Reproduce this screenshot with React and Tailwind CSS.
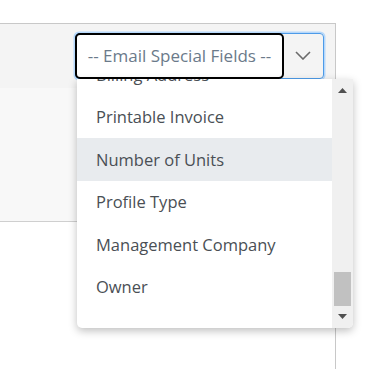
import React from 'react';

const items = [
  'Billing Address',
  'Printable Invoice',
  'Number of Units',
  'Profile Type',
  'Management Company',
  'Owner',
];

function Chevron() {
  return (
    <svg width="16" height="9" viewBox="0 0 16 9" fill="none">
      <path d="M1 1l7 7 7-7" stroke="#6b6b6b" strokeWidth="1.6" />
    </svg>
  );
}

export default function App() {
  const active = 'Number of Units';

  return (
    <div className="relative h-[369px] w-[379px] overflow-hidden bg-white pt-[23px] font-['Open_Sans',sans-serif]">
      {/* Panel */}
      <div className="h-[346px] w-[336px] border-t border-r border-[#c8c8c8]">
        <div className="flex h-[64px] justify-end bg-[#f4f4f4] pt-[9px] pr-[11px]">
          {/* Select with focus ring */}
          <div className="flex h-[46px] w-[249px] rounded-[4px] border border-[#4d9be8] shadow-[0_0_0_1.5px_#b6d8fb]">
            <div className="flex h-[46px] w-[209px] -mt-px -ml-px items-center justify-center rounded-[5px] border-2 border-black bg-white pb-px text-[17px] text-[#6b7a8a]">
              -- Email Special Fields --
            </div>
            <div className="flex flex-1 items-center justify-center pb-[1px] pr-[2px]">
              <Chevron />
            </div>
          </div>
        </div>
        <div className="h-[134px] border-b border-[#cfcfcf] bg-[#f8f8f8]" />
      </div>

      {/* Dropdown list */}
      <div className="absolute left-[77px] top-[79px] flex h-[249px] w-[276px] overflow-hidden rounded-b-[5px] bg-white shadow-[0_3px_8px_rgba(0,0,0,0.25)]">
        <div className="flex-1 overflow-hidden">
          <div className="-mt-[26px]">
            {items.map((item) => (
              <div
                key={item}
                className={`flex h-[42.5px] items-center pl-[19px] pt-[2px] text-[16.5px] text-[#4a4f55] ${
                  item === active ? 'bg-[#e8ebee]' : ''
                }`}
              >
                {item}
              </div>
            ))}
          </div>
        </div>
        {/* Scrollbar */}
        <div className="relative flex w-[21px] flex-col items-center bg-[#f0f0f0]">
          <svg className="mt-[9px]" width="9" height="5" viewBox="0 0 9 5">
            <path d="M0 5L4.5 0 9 5z" fill="#505050" />
          </svg>
          <div className="mt-[179px] h-[34px] w-[17px] bg-[#c1c1c1]" />
          <svg className="mt-[8px]" width="9" height="5" viewBox="0 0 9 5">
            <path d="M0 0L4.5 5 9 0z" fill="#505050" />
          </svg>
        </div>
      </div>
    </div>
  );
}
